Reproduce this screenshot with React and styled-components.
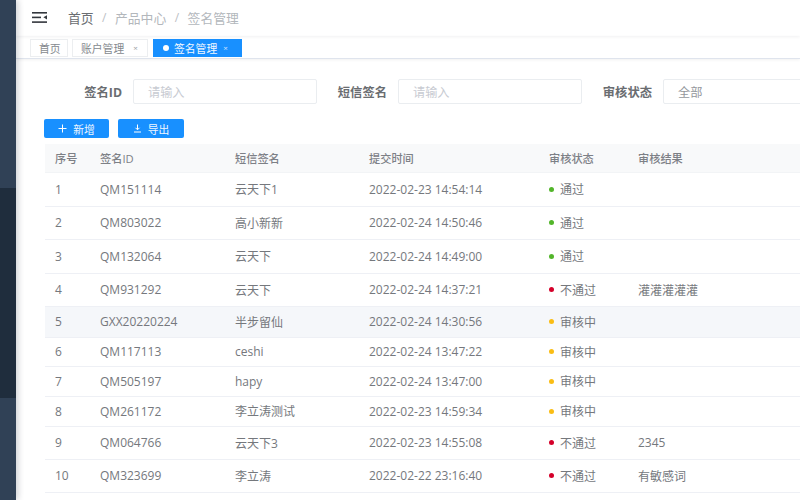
import React from "react";
import styled, { createGlobalStyle } from "styled-components";

const Global = createGlobalStyle`
  html, body { margin: 0; padding: 0; height: 100%; overflow: hidden; background: #fff; }
  body { font-family: "Open Sans", "Noto Sans CJK SC", sans-serif; }
`;
const Shell = styled.div`display: flex; width: 800px; height: 500px; overflow: hidden;`;
const Sidebar = styled.aside`
  width: 16px; flex: none; background: #304156; display: flex; flex-direction: column;
  padding-top: 188px; box-sizing: border-box; box-shadow: 2px 0 6px rgba(0, 21, 41, 0.2); z-index: 2;
`;
const SideMenu = styled.div`height: 210px; background: #1f2d3d;`;
const Main = styled.main`flex: none; width: 784px; display: flex; flex-direction: column;`;
const TopBar = styled.header`
  height: 36px; flex: none; display: flex; align-items: center; padding: 0 0 1px 16px; gap: 21px; box-sizing: border-box;
  box-shadow: 0 1px 3px rgba(0, 21, 41, 0.06);
`;
const Crumbs = styled.nav`display: flex; align-items: center; gap: 7.5px; font-size: 12.8px;`;
const Crumb = styled.span`color: ${p => (p.$root ? "#6a6d71" : "#b3b7bc")};`;
const Sep = styled.span`color: #bcc0c5; font-size: 12px; padding: 0 1px;`;
const TagBar = styled.div`
  height: 23px; flex: none; display: flex; align-items: center; gap: 4px; padding: 1px 0 0 14px; box-sizing: border-box;
  border-bottom: 1px solid #dfe4ed; box-shadow: 0 1px 3px rgba(0, 0, 0, 0.06);
`;
const Tag = styled.div`
  height: 18px; width: ${p => p.$w}px; display: flex; align-items: center; flex: none; gap: ${p => (p.$active ? "5px" : "8px")};
  padding: 0 0 0 ${p => (p.$active ? "9px" : "8px")}; box-sizing: border-box; margin-left: ${p => (p.$active ? "1px" : "0")};
  font-size: 10.8px; border: 1px solid ${p => (p.$active ? "#1890ff" : "#eceef0")};
  background: ${p => (p.$active ? "#1890ff" : "#fff")}; color: ${p => (p.$active ? "#f2f8ff" : "#85898e")};
`;
const TagDot = styled.i`width: 6px; height: 6px; border-radius: 50%; background: #fff;`;
const TagClose = styled.span`font-size: 8px; opacity: .8; margin-left: 1px;`;
const Content = styled.section`flex: 1; padding: 20px 0 0 29px; min-width: 0;`;
const Filters = styled.form`display: flex; align-items: center; height: 25px; margin: 0;`;
const FilterLabel = styled.label`
  font-size: 12.3px; font-weight: 700; color: #6a6d71; width: ${p => p.$w}px; text-align: right; flex: none; margin-right: 11px;
`;
const Field = styled.div`
  width: ${p => p.$w}px; height: 25px; flex: none; border: 1px solid #eaedf0; border-radius: 2px; box-sizing: border-box;
  display: flex; align-items: center; padding-left: 14px; font-size: 12.2px; color: ${p => (p.$value ? "#94979c" : "#c8cbd2")};
  margin-right: ${p => p.$mr || 0}px;
`;
const Actions = styled.div`display: flex; gap: 9px; margin: 15px 0 0 -1px;`;
const Btn = styled.button`
  width: ${p => p.$w}px; height: 19px; border: 0; border-radius: 2px; background: #1890ff; color: #eef6ff; padding: 0;
  font: 10.8px "Open Sans", "Noto Sans CJK SC", sans-serif; display: flex; align-items: center; justify-content: center; gap: 6px;
`;
const Table = styled.div`margin-top: 6px; width: 760px; font-size: 12px; color: #75787d;`;
const Row = styled.div`
  display: grid; grid-template-columns: 45px 135px 134px 180px 89px 1fr; align-items: center; box-sizing: border-box;
  height: ${p => p.$h}px; padding-bottom: 1px; border-bottom: 1px solid #eef0f5; background: ${p => (p.$hl ? "#f5f7fa" : "#fff")};
`;
const HeadRow = styled(Row)`background: #f8f9fa; color: #7d8086; font-size: 11.2px; font-weight: 500; border-bottom-color: #f2f4f6;`;
const Cell = styled.div`padding-left: 10px; white-space: nowrap;`;
const Status = styled(Cell)`display: flex; align-items: center; gap: 6px;`;
const Dot = styled.i`width: 5px; height: 5px; border-radius: 50%; background: ${p => p.$c}; flex: none;`;

const G = "#52b52a", R = "#d4002a", Y = "#fabd14";
const rows = [
  [1, "QM151114", "云天下1", "2022-02-23 14:54:14", G, "通过", "", 34],
  [2, "QM803022", "高小新新", "2022-02-24 14:50:46", G, "通过", "", 33],
  [3, "QM132064", "云天下", "2022-02-24 14:49:00", G, "通过", "", 34],
  [4, "QM931292", "云天下", "2022-02-24 14:37:21", R, "不通过", "灌灌灌灌灌", 33],
  [5, "GXX20220224", "半步留仙", "2022-02-24 14:30:56", Y, "审核中", "", 31],
  [6, "QM117113", "ceshi", "2022-02-24 13:47:22", Y, "审核中", "", 29],
  [7, "QM505197", "hapy", "2022-02-24 13:47:00", Y, "审核中", "", 30],
  [8, "QM261172", "李立涛测试", "2022-02-23 14:59:34", Y, "审核中", "", 30],
  [9, "QM064766", "云天下3", "2022-02-23 14:55:08", R, "不通过", "2345", 33],
  [10, "QM323699", "李立涛", "2022-02-22 23:16:40", R, "不通过", "有敏感词", 33],
];

const MenuIcon = () => (
  <svg width="15" height="11" viewBox="0 0 15 11" fill="#33373d">
    <rect width="15" height="1.6" />
    <rect y="4.6" width="9" height="1.6" />
    <rect y="9.3" width="15" height="1.6" />
    <path d="M15 3.2v4.2l-3.6-2.1z" />
  </svg>
);
const PlusIcon = () => (
  <svg width="9" height="9" viewBox="0 0 9 9" stroke="#fff" fill="none"><path d="M4.5 0.5v8M.5 4.5h8" /></svg>
);
const ExportIcon = () => (
  <svg width="9" height="9" viewBox="0 0 9 9" stroke="#fff" fill="none"><path d="M4.5 0.5v5M2.5 3.8l2 2 2-2M1 8h7" /></svg>
);

export default function App() {
  return (
    <>
      <Global />
      <Shell>
        <Sidebar><SideMenu /></Sidebar>
        <Main>
          <TopBar>
            <MenuIcon />
            <Crumbs>
              <Crumb $root>首页</Crumb><Sep>/</Sep>
              <Crumb>产品中心</Crumb><Sep>/</Sep>
              <Crumb>签名管理</Crumb>
            </Crumbs>
          </TopBar>
          <TagBar>
            <Tag $w={38}>首页</Tag>
            <Tag $w={76}>账户管理<TagClose>×</TagClose></Tag>
            <Tag $w={89} $active><TagDot />签名管理<TagClose>×</TagClose></Tag>
          </TagBar>
          <Content>
            <Filters>
              <FilterLabel $w={77}>签名ID</FilterLabel>
              <Field $w={184} $mr={20}>请输入</Field>
              <FilterLabel $w={50}>短信签名</FilterLabel>
              <Field $w={184} $mr={20}>请输入</Field>
              <FilterLabel $w={50}>审核状态</FilterLabel>
              <Field $w={184} $value>全部</Field>
            </Filters>
            <Actions>
              <Btn $w={65} type="button"><PlusIcon />新增</Btn>
              <Btn $w={66} type="button"><ExportIcon />导出</Btn>
            </Actions>
            <Table>
              <HeadRow $h={29}>
                <Cell>序号</Cell><Cell>签名ID</Cell><Cell>短信签名</Cell><Cell>提交时间</Cell><Cell>审核状态</Cell><Cell>审核结果</Cell>
              </HeadRow>
              {rows.map(r => (
                <Row key={r[0]} $h={r[7]} $hl={r[0] === 5}>
                  <Cell>{r[0]}</Cell><Cell>{r[1]}</Cell><Cell>{r[2]}</Cell><Cell>{r[3]}</Cell>
                  <Status><Dot $c={r[4]} />{r[5]}</Status>
                  <Cell>{r[6]}</Cell>
                </Row>
              ))}
            </Table>
          </Content>
        </Main>
      </Shell>
    </>
  );
}
